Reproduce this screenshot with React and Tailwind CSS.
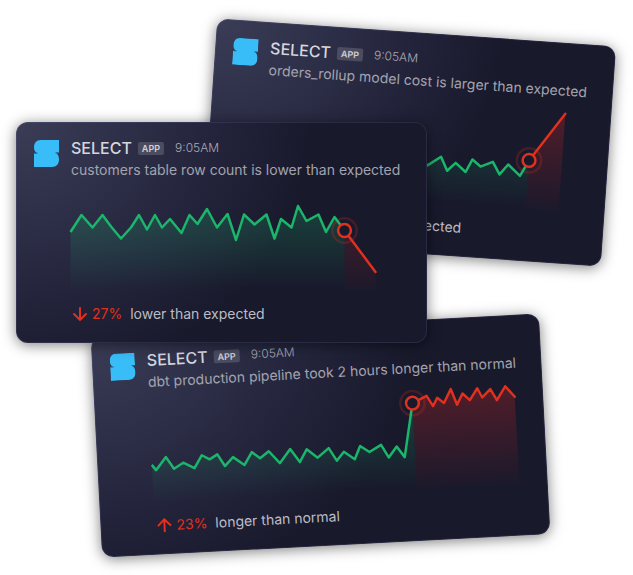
import { useId } from 'react';

const ROW_COUNT_LINE =
  '54.5,110 65.5,93 76.5,105.5 86.5,93 95,104.5 105,116.5 115,105.5 123,93 131,107.5 139,93 146,105.5 154,97 165.5,111 173.5,93 181.5,102 191,87 201,105.5 211.5,92 220,118 228,92.5 238.5,102.5 250.5,92.5 258.5,116.5 265,97 275.5,105.5 282,84 290.5,99 302.5,92.5 310,110 318.5,95 328.5,108.5';

const ROLLUP_LINE =
  '54.5,131 58.5,136.5 69,124 76.5,136 86,130.5 97,136.5 105,124 112.5,128.5 120.5,124 127.5,136 136,127.5 147,136 155,123.5 163,130 172,123.5 182.5,136 193.5,122.5 202.5,136 210,123.5 220,132 233,122.5 240,136 248,127.5 258.5,136 264.5,123 273,129.5 285,124 292.5,136 300.5,125.5 313,136 321,120';

const PIPELINE_LINE =
  '54.5,131 58.5,136.5 69,124 76.5,136 86,130.5 97,136.5 105,124 112.5,128.5 120.5,124 127.5,136 136,127.5 147,136 155,123.5 163,130 172,123.5 182.5,136 193.5,122.5 202.5,136 210,123.5 220.5,132.5 232,123.5 239.5,136.5 247,128 257.5,136 263.5,123 272.5,129.5 284.5,123 291.5,136 300,125.5 307.5,136.5 318,83';

const PIPELINE_ALERT =
  '318,83 332.5,76.5 338.5,87 343,79 349.5,84.5 357,71 362.5,87 368.5,76 375.5,83 383.5,71.5 388,81 396.5,73 402.5,84.5 411.5,71 420.5,82';

const alerts = [
  {
    place: 'left-[209px] top-[32px] w-[400px] rotate-4',
    message: 'orders_rollup model cost is larger than expected',
    direction: 'up',
    percent: '31%',
    note: 'greater than expected',
    line: ROLLUP_LINE,
    alertLine: '321,120 354,71',
    point: [321, 120],
    end: 354,
  },
  {
    place: 'left-[96px] top-[325px] w-[449px] -rotate-3',
    message: 'dbt production pipeline took 2 hours longer than normal',
    direction: 'up',
    percent: '23%',
    note: 'longer than normal',
    line: PIPELINE_LINE,
    alertLine: PIPELINE_ALERT,
    point: [318, 83],
    end: 420.5,
  },
  {
    place: 'left-[16px] top-[122px] w-[411px]',
    message: 'customers table row count is lower than expected',
    direction: 'down',
    percent: '27%',
    note: 'lower than expected',
    line: ROW_COUNT_LINE,
    alertLine: '328.5,108.5 359.5,150',
    point: [328.5, 108.5],
    end: 359.5,
  },
];

function Logo() {
  return (
    <svg width="25" height="27" viewBox="0 0 25 27" fill="#38bdf8" aria-hidden="true" className="shrink-0">
      <path d="M6.5 0H25V12.500H21.500C24 14 25 16.500 25 19.500C25 24 22.500 27 18 27H0V13.500H3.500C1 12 0 10 0 7.500C0 3 2.500 0 6.500 0Z" />
      <path d="M0 13H4M21 13H25" stroke="#2b6f9b" strokeWidth="0.500" />
    </svg>
  );
}

function Arrow({ direction }) {
  return (
    <svg width="16" height="16" viewBox="0 0 16 16" fill="none" stroke="#e0301e" strokeWidth="2" strokeLinecap="round" strokeLinejoin="round" aria-hidden="true">
      <path d={direction === 'down' ? 'M8 2V14M2 8L8 14L14 8' : 'M8 14V2M2 8L8 2L14 8'} />
    </svg>
  );
}

function Chart({ line, alertLine, point, end }) {
  const id = useId();
  const [x, y] = point;
  return (
    <svg viewBox="54 60 380 110" className="-ml-px block h-[110px] w-[380px] overflow-visible" aria-hidden="true">
      <defs>
        <linearGradient id={`${id}g`} gradientUnits="userSpaceOnUse" x1="0" y1="85" x2="0" y2="168">
          <stop offset="0" stopColor="#1db36b" stopOpacity="0.26" />
          <stop offset="1" stopColor="#1db36b" stopOpacity="0" />
        </linearGradient>
        <linearGradient id={`${id}r`} gradientUnits="userSpaceOnUse" x1="0" y1="68" x2="0" y2="168">
          <stop offset="0" stopColor="#dc2626" stopOpacity="0.3" />
          <stop offset="1" stopColor="#dc2626" stopOpacity="0.02" />
        </linearGradient>
        <mask id={`${id}m`} maskUnits="userSpaceOnUse" x="0" y="0" width="460" height="230">
          <rect width="460" height="230" fill="white" />
          <circle cx={x} cy={y} r="6" fill="black" />
        </mask>
      </defs>
      <polygon points={`${line} ${x},168 54.5,168`} fill={`url(#${id}g)`} />
      <polygon points={`${alertLine} ${end},168 ${x},168`} fill={`url(#${id}r)`} />
      <circle cx={x} cy={y} r="12.2" fill="none" stroke="#e0301e" strokeOpacity="0.22" strokeWidth="2.5" />
      <g mask={`url(#${id}m)`} fill="none" strokeWidth="2.5" strokeLinejoin="round">
        <polyline points={line} stroke="#1bb56c" />
        <polyline points={alertLine} stroke="#e0301e" strokeLinecap="round" />
      </g>
      <circle cx={x} cy={y} r="6.4" fill="#18192b" stroke="#e0301e" strokeWidth="2.5" />
    </svg>
  );
}

function AlertCard({ place, message, direction, percent, note, ...chart }) {
  return (
    <article
      className={`absolute rounded-xl border border-[#8c90d0]/15 bg-[#18192b] bg-[radial-gradient(ellipse_72%_120%_at_0%_0%,#3b3d57_0%,#2e3049_35%,#23243b_68%,#18192b_100%)] bg-origin-border pt-[16px] pr-2 pb-[18px] pl-[17px] shadow-[0_2px_14px_rgba(0,0,0,0.5)] ${place}`}
    >
      <div className="flex gap-3">
        <div className="pt-px">
          <Logo />
        </div>
        <div className="whitespace-nowrap">
          <header className="flex h-[18px] items-center">
            <h2 className="text-[16px] leading-[18px] font-medium text-[#d6d6de]">SELECT</h2>
            <span className="ml-[6px] rounded-xs bg-[#4b4c60] px-1 text-[9px] leading-[13px] font-semibold text-[#d0d0d8]">APP</span>
            <time className="ml-[11px] text-[12px] leading-[18px] font-light text-[#a9aab5]">9:05AM</time>
          </header>
          <p className="mt-[3px] text-[14px] leading-[20px] text-[#a3a3ae]">{message}</p>
        </div>
      </div>
      <div className="ml-[37px] h-[124px] pt-[2px]">
        <Chart {...chart} />
      </div>
      <footer className="ml-[38px] flex h-5 items-center text-[14px] leading-5">
        <Arrow direction={direction} />
        <span className="ml-1 text-[#e0301e]">{percent}</span>
        <span className="ml-2 text-[#bcbcc5]">{note}</span>
      </footer>
    </article>
  );
}

export default function App() {
  return (
    <main className="relative min-h-screen overflow-hidden bg-white font-['Inter',sans-serif]">
      {alerts.map((alert) => (
        <AlertCard key={alert.message} {...alert} />
      ))}
    </main>
  );
}
